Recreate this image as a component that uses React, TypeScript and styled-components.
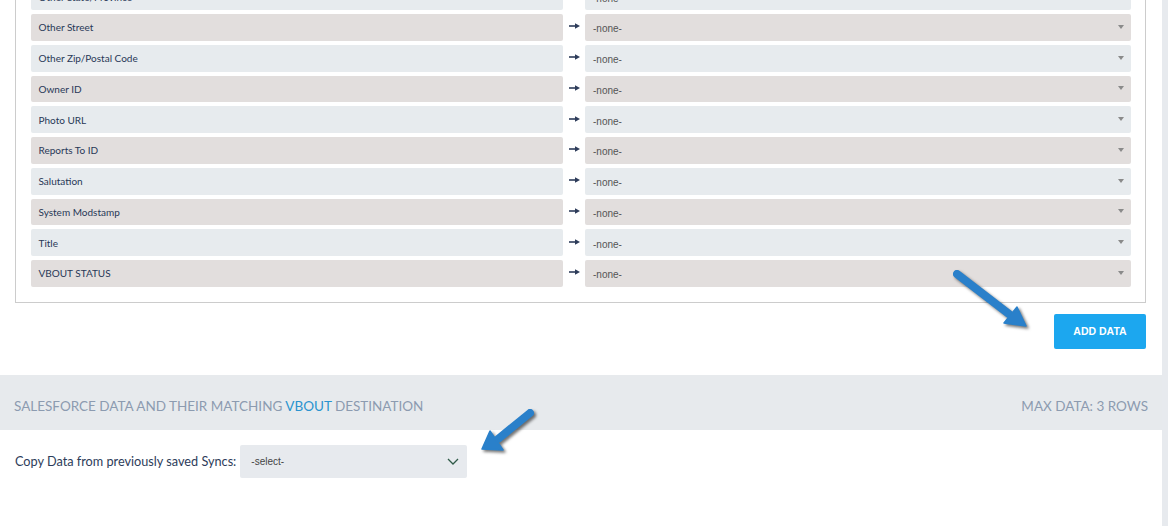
import React from "react";
import styled, { createGlobalStyle } from "styled-components";

const GlobalStyle = createGlobalStyle`
  html, body { margin: 0; padding: 0; background: #fff; }
  body { font-family: "Lato", "Open Sans", sans-serif; }
  * { box-sizing: border-box; }
`;

const Page = styled.div`
  position: relative;
  display: flex;
  width: 1168px;
  height: 526px;
  overflow: hidden;
  background: #fff;
`;

const Main = styled.div`
  width: 1162px;
  display: flex;
  flex-direction: column;
`;

const ScrollStrip = styled.div`
  width: 6px;
  background: #e7eaee;
`;

const PanelWrap = styled.div`
  padding: 0 16px 0 15px;
  margin-top: -32.75px;
`;

const Panel = styled.div`
  border: 1px solid #cccccc;
  padding: 15px 14px 15px 15px;
  display: flex;
  flex-direction: column;
  gap: 4px;
`;

const Row = styled.div`
  display: grid;
  grid-template-columns: 532px 22px 1fr;
  height: 26.75px;
`;

const Cell = styled.div<{ $warm: boolean }>`
  background: ${(p) => (p.$warm ? "#e2dedd" : "#e7ebee")};
  border-radius: 2px;
  display: flex;
  align-items: center;
`;

const Label = styled(Cell)`
  padding-left: 7.5px;
  font-family: "Lato", sans-serif;
  font-size: 10px;
  color: #283857;
`;

const SelectCell = styled(Cell)`
  justify-content: space-between;
  padding: 3px 7px 0 8px;
  font-family: "Liberation Sans", Arial, sans-serif;
  font-size: 10px;
  color: #555;
`;

const Caret = styled.span`
  width: 0;
  height: 0;
  margin-top: -4px;
  border-left: 3px solid transparent;
  border-right: 3px solid transparent;
  border-top: 4px solid #8a8a8a;
`;

const ArrowCell = styled.div`
  display: flex;
  align-items: center;
  justify-content: center;
  padding-bottom: 2px;
`;

const ButtonRow = styled.div`
  display: flex;
  justify-content: flex-end;
  padding: 11px 16px 0 0;
`;

const AddButton = styled.button`
  width: 92px;
  height: 35px;
  border: none;
  border-radius: 2px;
  background: #1ca7ef;
  color: #fff;
  font-family: "Liberation Sans", Arial, sans-serif;
  font-weight: 700;
  font-size: 10.5px;
  cursor: pointer;
`;

const Band = styled.div`
  margin-top: 26px;
  height: 55px;
  background: #e7eaed;
  display: flex;
  align-items: center;
  justify-content: space-between;
  padding: 8px 14px 0 14px;
  font-family: "Lato", sans-serif;
  font-size: 13.5px;
  color: #8c9bb0;
  text-transform: uppercase;
`;

const Accent = styled.span`
  color: #2a93cf;
`;

const CopyRow = styled.div`
  display: flex;
  align-items: center;
  gap: 4px;
  padding: 15px 15px;
`;

const CopyText = styled.span`
  font-family: "Lato", sans-serif;
  font-size: 12.7px;
  color: #2d3c5a;
`;

const SyncSelect = styled.div`
  width: 227px;
  height: 33px;
  background: #e7eaee;
  border-radius: 2px;
  display: flex;
  align-items: center;
  justify-content: space-between;
  padding: 0 8px 0 11px;
  font-family: "Liberation Sans", Arial, sans-serif;
  font-size: 10px;
  color: #444;
`;

const Pointer = styled.svg<{ $left: number; $top: number }>`
  position: absolute;
  left: ${(p) => p.$left}px;
  top: ${(p) => p.$top}px;
  overflow: visible;
  filter: drop-shadow(2px 2px 1.5px rgba(0, 0, 0, 0.55));
`;

const rows = [
  "Other State/Province",
  "Other Street",
  "Other Zip/Postal Code",
  "Owner ID",
  "Photo URL",
  "Reports To ID",
  "Salutation",
  "System Modstamp",
  "Title",
  "VBOUT STATUS",
];

const MapArrow = () => (
  <svg width="11" height="6" viewBox="0 0 11 6">
    <path d="M0 3 H7" stroke="#2d3c5a" strokeWidth="1.6" />
    <path d="M6 0.2 L11 3 L6 5.8 Z" fill="#2d3c5a" />
  </svg>
);

type Pt = [number, number];
const BlueArrow = ({
  left,
  top,
  w,
  h,
  tail,
  base,
  tip,
  w1,
  w2,
}: {
  left: number;
  top: number;
  w: number;
  h: number;
  tail: Pt;
  base: Pt;
  tip: Pt;
  w1: Pt;
  w2: Pt;
}) => (
  <Pointer $left={left} $top={top} width={w} height={h} viewBox={`0 0 ${w} ${h}`}>
    <line
      x1={tail[0]}
      y1={tail[1]}
      x2={base[0]}
      y2={base[1]}
      stroke="#2a80ca"
      strokeWidth="8"
      strokeLinecap="round"
    />
    <polygon
      points={`${w1[0]},${w1[1]} ${tip[0]},${tip[1]} ${w2[0]},${w2[1]}`}
      fill="#2a80ca"
      stroke="#2a80ca"
      strokeWidth="1.5"
      strokeLinejoin="round"
    />
  </Pointer>
);

export default function App() {
  return (
    <>
      <GlobalStyle />
      <Page>
        <Main>
          <PanelWrap>
            <Panel>
              {rows.map((r, i) => {
                const warm = i % 2 === 1;
                return (
                  <Row key={r}>
                    <Label $warm={warm}>{r}</Label>
                    <ArrowCell>
                      <MapArrow />
                    </ArrowCell>
                    <SelectCell $warm={warm}>
                      <span>-none-</span>
                      <Caret />
                    </SelectCell>
                  </Row>
                );
              })}
            </Panel>
          </PanelWrap>
          <ButtonRow>
            <AddButton>ADD DATA</AddButton>
          </ButtonRow>
          <Band>
            <span>
              Salesforce data and their matching <Accent>VBOUT</Accent> destination
            </span>
            <span>Max data: 3 rows</span>
          </Band>
          <CopyRow>
            <CopyText>Copy Data from previously saved Syncs:</CopyText>
            <SyncSelect>
              <span>-select-</span>
              <svg width="12" height="7" viewBox="0 0 12 7">
                <path d="M1 1 L6 6 L11 1" fill="none" stroke="#2f5a48" strokeWidth="1.3" />
              </svg>
            </SyncSelect>
          </CopyRow>
        </Main>
        <ScrollStrip />
        <BlueArrow
          left={945}
          top={262}
          w={95}
          h={75}
          tail={[12, 12]}
          base={[64, 52]}
          tip={[81, 64]}
          w1={[72, 45]}
          w2={[59, 61]}
        />
        <BlueArrow
          left={470}
          top={400}
          w={75}
          h={60}
          tail={[60, 13]}
          base={[28, 39]}
          tip={[12, 49]}
          w1={[20, 31]}
          w2={[33, 50]}
        />
      </Page>
    </>
  );
}
